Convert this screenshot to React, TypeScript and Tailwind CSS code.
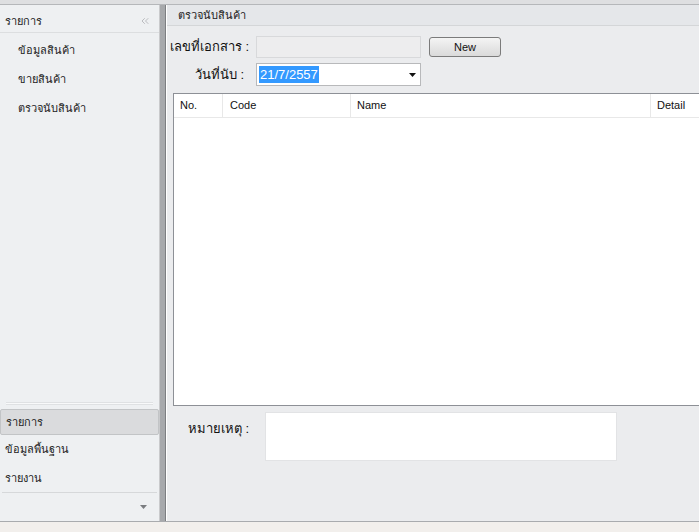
import { ChevronsLeft } from "lucide-react"

const font = { fontFamily: 'Tahoma, "Liberation Sans", "Noto Sans", sans-serif' }

const topMenu = ["ข้อมูลสินค้า", "ขายสินค้า", "ตรวจนับสินค้า"]

function Sidebar() {
  return (
    <div className="flex w-[159px] flex-col bg-[#eef0f2]">
      <div className="flex h-[28px] items-center justify-between border-b border-[#dcdee0] pl-[5px] pr-[8px] pt-[5px] text-[11px] text-[#222]">
        <span>รายการ</span>
        <ChevronsLeft className="size-[12px] text-[#9a9ca0]" strokeWidth={1.25} />
      </div>
      <div className="flex flex-col pt-[3px]">
        {topMenu.map((item) => (
          <div key={item} className="flex h-[29px] items-center pl-[18px] text-[11px] text-[#222]">
            {item}
          </div>
        ))}
      </div>
      <div className="flex-1" />
      <div className="mx-[6px] mb-[4px] h-[3px] border-y border-[#dfe1e3] bg-white/60" />
      <div className="flex h-[26px] items-center rounded-[2px] border border-[#c2c4c6] bg-[#dadbdd] pl-[5px] text-[11px] text-[#222]">
        รายการ
      </div>
      <div className="flex h-[29px] items-center pl-[5px] text-[11px] text-[#222]">ข้อมูลพื้นฐาน</div>
      <div className="flex h-[28px] items-center pl-[5px] text-[11px] text-[#222]">รายงาน</div>
      <div className="mx-[2px] h-[1px] bg-[#d6d8da]" />
      <div className="flex h-[28px] items-center justify-end pr-[12px]">
        <svg width="7" height="4" viewBox="0 0 7 4">
          <path d="M0 0 H7 L3.5 4 Z" fill="#7a7c80" />
        </svg>
      </div>
    </div>
  )
}

function Field() {
  return (
    <div className="flex flex-col gap-[5px] pt-[10px]">
      <div className="flex items-center">
        <div className="w-[89px] pl-[3px] text-[13px] text-[#111]">เลขที่เอกสาร :</div>
        <div className="h-[22px] w-[165px] border border-[#d8d9db] bg-[#ededee]" />
        <button className="ml-[8px] h-[20px] w-[72px] rounded-[3px] border border-[#7b7b7b] bg-gradient-to-b from-[#f4f4f4] to-[#dadada] text-[11px] text-[#111]">
          New
        </button>
      </div>
      <div className="flex items-center">
        <div className="w-[89px] pr-[12px] text-right text-[13px] text-[#111]">วันที่นับ :</div>
        <div className="flex h-[23px] w-[165px] items-center justify-between border border-[#b8b9bb] bg-white pl-[2px] pr-[4px]">
          <span className="bg-[#3399ff] px-[1px] text-[13px] leading-[17px] text-white">21/7/2557</span>
          <svg width="7" height="4" viewBox="0 0 7 4">
            <path d="M0 0 H7 L3.5 4 Z" fill="#111" />
          </svg>
        </div>
      </div>
    </div>
  )
}

function Grid() {
  return (
    <div className="ml-[6px] mr-[-14px] mt-[7px] h-[313px] border border-[#8d9096] bg-white">
      <div className="flex h-[24px] border-b border-[#e8e8e8] text-[11px] text-[#111]">
        <div className="flex w-[49px] items-center border-r border-[#e8e8e8] pl-[6px]">No.</div>
        <div className="flex w-[128px] items-center border-r border-[#e8e8e8] pl-[7px]">Code</div>
        <div className="flex w-[300px] items-center border-r border-[#e8e8e8] pl-[6px]">Name</div>
        <div className="flex flex-1 items-center pl-[6px]">Detail</div>
      </div>
    </div>
  )
}

export default function App() {
  return (
    <div style={font} className="flex h-[532px] w-[699px] flex-col overflow-hidden bg-[#f2efec]">
      <div className="h-[5px] border-b border-[#b5b7ba] bg-[#dedfe1]" />
      <div className="flex h-[517px] border-b border-[#a9abae]">
        <Sidebar />
        <div className="w-[7px] border-x border-l-[#c9cacc] border-r-[#7d7f82] bg-[#a7a9ac]" />
        <div className="flex flex-1 flex-col border-l border-white bg-[#ebecee]">
          <div className="flex h-[21px] items-center border-b border-[#d4d6d8] bg-[#e5e7ea] pl-[11px] text-[11px] text-[#222]">
            ตรวจนับสินค้า
          </div>
          <Field />
          <Grid />
          <div className="mt-[6px] flex">
            <div className="w-[98px] pl-[21px] pt-[7px] text-[13px] text-[#111]">หมายเหตุ :</div>
            <div className="h-[49px] w-[352px] border border-[#e2e3e5] bg-white" />
          </div>
        </div>
      </div>
    </div>
  )
}
